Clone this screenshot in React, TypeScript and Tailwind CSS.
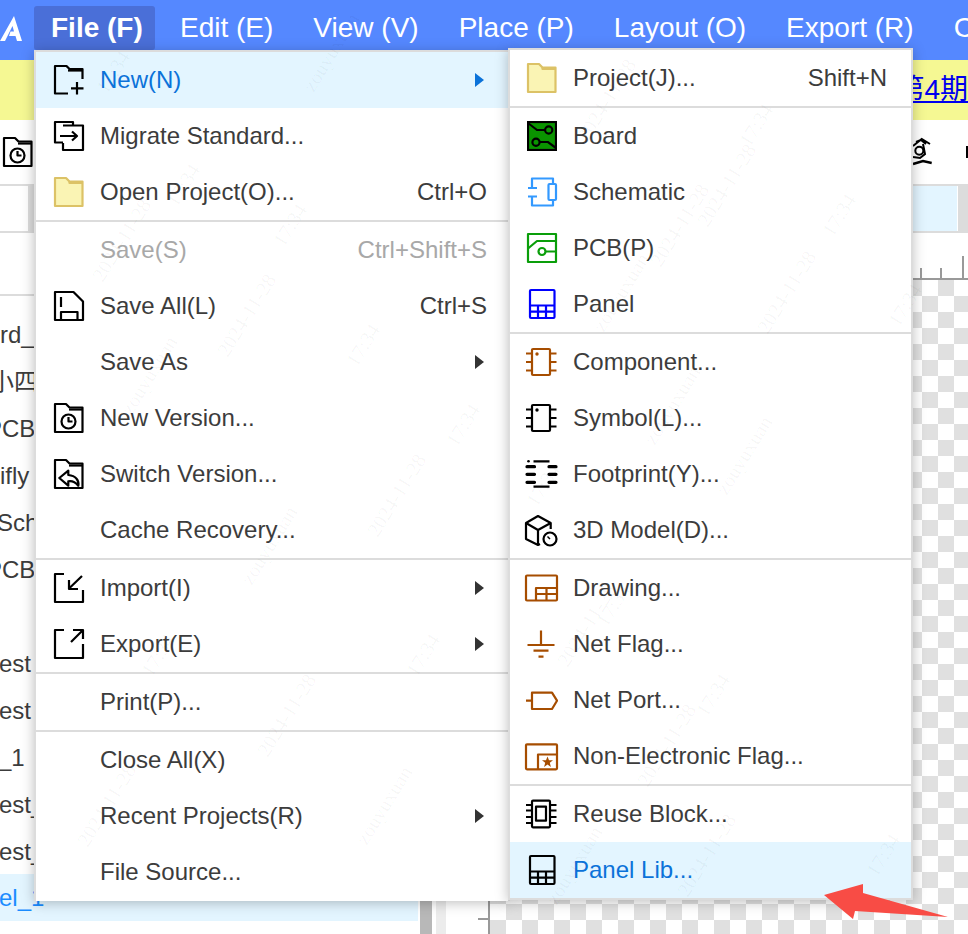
import React from "react";

const BROWN = "#a64d00";

function Ico({ children, color = "#000", dx = 0 }: { children: React.ReactNode; color?: string; dx?: number }) {
  return (
    <svg width="30" height="30" viewBox="0 0 30 30" fill="none" stroke={color} strokeWidth="2.2" strokeLinejoin="round" className="shrink-0 overflow-visible">
      <g transform={`translate(${dx} 0)`}>{children}</g>
    </svg>
  );
}

const folderPath = "M1 1H12L15.5 4.5H28.5V29H1Z";

const icons: Record<string, React.ReactNode> = {
  new: (
    <Ico>
      <path d="M14 28.5H1V1H12.5L15.5 4H28.5V14" />
      <path d="M14 5.5H28" />
      <path d="M23 17V29.5M17 23.3H29.5" />
    </Ico>
  ),
  migrate: (
    <Ico>
      <path d="M19 4.5V1H1V21.5H9" />
      <path d="M9 4.5H29V29H9V22" />
      <path d="M6 15H23M18 10.5L23 15L18 19.5" />
    </Ico>
  ),
  yellow: (
    <Ico color="#dcc266">
      <path d={folderPath} fill="#faf4b4" />
      <path d="M15.5 4.5L15.5 6H28.5" />
    </Ico>
  ),
  saveAll: (
    <Ico>
      <path d="M1 1H19.5L29 10.5V29H1Z" />
      <path d="M7 6V16M7 29V21H23.5V29" />
    </Ico>
  ),
  folderClock: (
    <Ico>
      <path d={folderPath} />
      <path d="M15 6.5H28" />
      <circle cx="14.5" cy="18.5" r="7" />
      <path d="M14.5 14V18.5H18.5" />
    </Ico>
  ),
  folderBack: (
    <Ico>
      <path d={folderPath} />
      <path d="M15 6.5H28" />
      <path d="M5.3 19L14.3 11.7V16C22 16.7 25.3 21.7 24.3 26.7C21 22.7 17.7 21.7 14.3 22.3V26.7Z" />
    </Ico>
  ),
  import: (
    <Ico>
      <path d="M10 1H1V29H29V17" />
      <path d="M28 3L15 15.5M15 7V16H24" />
    </Ico>
  ),
  export: (
    <Ico>
      <path d="M10 1H1V29H29V15" />
      <path d="M17 13L29 1M19 1H29V10" />
    </Ico>
  ),
  board: (
    <svg width="30" height="30" viewBox="0 0 30 30" fill="none" stroke="#000" strokeWidth="2.2" className="shrink-0">
      <rect x="1" y="1" width="28" height="28" fill="#0a9400" />
      <path d="M1 2L10 9H18M12.5 21H21L29 27" />
      <circle cx="21.7" cy="9" r="3.6" />
      <circle cx="9" cy="21.3" r="3.6" />
    </svg>
  ),
  schematic: (
    <Ico color="#3399ff">
      <path d="M5 11V1.5H26V7M5 19.5V28.5H26V23" />
      <path d="M1 11H10M1 19.5H10" />
      <rect x="21.5" y="7" width="7.5" height="16" rx="1" />
    </Ico>
  ),
  pcb: (
    <Ico color="#0a9e0a">
      <rect x="1" y="1" width="28" height="28" />
      <path d="M1 15.5L10 8H29M18.5 18.5H29" />
      <circle cx="15" cy="18.5" r="3.5" />
    </Ico>
  ),
  panel: (
    <Ico color="#0000ff">
      <rect x="3" y="1" width="24.5" height="28" rx="1" />
      <path d="M3 16.5H27.5M3 22.7H27.5M11 16.5V29M19 16.5V29" />
    </Ico>
  ),
  component: (
    <Ico color={BROWN} dx={-2}>
      <rect x="7" y="2" width="18" height="26" rx="1" />
      <path d="M1 6.5H7M1 15H7M1 23.5H7M25 6.5H31.5M25 15H31.5M25 23.5H31.5" />
      <circle cx="12" cy="7" r="1.7" fill={BROWN} stroke="none" />
    </Ico>
  ),
  symbol: (
    <Ico dx={-2}>
      <rect x="7" y="2" width="18" height="26" rx="1" />
      <path d="M1 6.5H7M1 15H7M1 23.5H7M25 6.5H31.5M25 15H31.5M25 23.5H31.5" />
      <circle cx="12" cy="7" r="1.7" fill="#000" stroke="none" />
    </Ico>
  ),
  footprint: (
    <Ico dx={-2}>
      <circle cx="3.5" cy="2.3" r="1.3" fill="#000" stroke="none" />
      <path d="M8.5 2.3H24.5M8.5 27.7H24.5" />
      <path d="M2 7.7H9.5M2 15.3H9.5M2 23.3H9.5M24 7.7H31M24 15.3H31M24 23.3H31" strokeWidth="3.2" strokeLinecap="round" />
    </Ico>
  ),
  model: (
    <Ico dx={-2}>
      <path d="M25.7 14V8L13 1L1 8V24L13 30L15 29" />
      <path d="M1 8L13 15L25.7 8M13 15V30" />
      <circle cx="25" cy="24" r="6.5" />
      <path d="M25 24L22.5 21.5" strokeWidth="1.5" />
    </Ico>
  ),
  drawing: (
    <Ico color={BROWN} dx={-2}>
      <rect x="1" y="2.5" width="31" height="25" rx="1" />
      <path d="M11 27.5V15H32M11 21H32M21.5 15V27.5" />
    </Ico>
  ),
  flag: (
    <Ico color={BROWN} dx={-1}>
      <path d="M15 1.5V16M1.5 16H28.5M7.5 21.7H22.5M12.5 27.7H17.5" />
    </Ico>
  ),
  port: (
    <Ico color={BROWN} dx={-2}>
      <path d="M1 15.7H7M7 7.7H27L32 15.7L27 24H7Z" />
    </Ico>
  ),
  nonElectric: (
    <Ico color={BROWN} dx={-2}>
      <rect x="1" y="3.3" width="31" height="25" rx="1" />
      <path d="M13 28V13.5H32" />
      <path d="M22.5 15.5L24 19.3H28L24.8 21.8L25.9 26L22.5 23.5L19.1 26L20.2 21.8L17 19.3H21Z" fill={BROWN} stroke="none" />
    </Ico>
  ),
  reuse: (
    <Ico dx={-2}>
      <rect x="7" y="1.7" width="18" height="26.6" rx="1" />
      <rect x="11" y="7.7" width="10" height="14" />
      <path d="M1 6H7M1 11.5H7M1 18H7M1 24H7M25 6H31.5M25 11.5H31.5M25 18H31.5M25 24H31.5" />
    </Ico>
  ),
  panelLib: (
    <Ico>
      <rect x="3" y="1" width="24.5" height="28" rx="1" />
      <path d="M3 16.5H27.5M3 22.7H27.5M11 16.5V29M19 16.5V29" />
    </Ico>
  ),
};

type Item = { label?: string; icon?: string; key?: string; arrow?: boolean; active?: boolean; disabled?: boolean; sep?: boolean };

const fileMenu: Item[] = [
  { label: "New(N)", icon: "new", arrow: true, active: true },
  { label: "Migrate Standard...", icon: "migrate" },
  { label: "Open Project(O)...", icon: "yellow", key: "Ctrl+O" },
  { sep: true },
  { label: "Save(S)", key: "Ctrl+Shift+S", disabled: true },
  { label: "Save All(L)", icon: "saveAll", key: "Ctrl+S" },
  { label: "Save As", arrow: true },
  { label: "New Version...", icon: "folderClock" },
  { label: "Switch Version...", icon: "folderBack" },
  { label: "Cache Recovery..." },
  { sep: true },
  { label: "Import(I)", icon: "import", arrow: true },
  { label: "Export(E)", icon: "export", arrow: true },
  { sep: true },
  { label: "Print(P)..." },
  { sep: true },
  { label: "Close All(X)" },
  { label: "Recent Projects(R)", arrow: true },
  { label: "File Source..." },
];

const newMenu: Item[] = [
  { label: "Project(J)...", icon: "yellow", key: "Shift+N" },
  { sep: true },
  { label: "Board", icon: "board" },
  { label: "Schematic", icon: "schematic" },
  { label: "PCB(P)", icon: "pcb" },
  { label: "Panel", icon: "panel" },
  { sep: true },
  { label: "Component...", icon: "component" },
  { label: "Symbol(L)...", icon: "symbol" },
  { label: "Footprint(Y)...", icon: "footprint" },
  { label: "3D Model(D)...", icon: "model" },
  { sep: true },
  { label: "Drawing...", icon: "drawing" },
  { label: "Net Flag...", icon: "flag" },
  { label: "Net Port...", icon: "port" },
  { label: "Non-Electronic Flag...", icon: "nonElectric" },
  { sep: true },
  { label: "Reuse Block...", icon: "reuse" },
  { label: "Panel Lib...", icon: "panelLib", active: true },
];

function MenuRows({ items, padClass }: { items: Item[]; padClass: string }) {
  return (
    <>
      {items.map((it, i) =>
        it.sep ? (
          <div key={i} className="h-[2px] bg-[#dcdcdc]" />
        ) : (
          <div
            key={i}
            className={`flex h-14 items-center ${padClass} ${it.active ? "bg-[#e3f5ff] text-[#0b72d9]" : it.disabled ? "text-[#a8a8a8]" : "text-[#3c3c3c]"}`}
          >
            <div className="h-[30px] w-[30px] shrink-0">{it.icon ? icons[it.icon] : null}</div>
            <span className="ml-4 whitespace-nowrap">{it.label}</span>
            {it.key && <span className="ml-auto">{it.key}</span>}
            {it.arrow && (
              <svg width="9" height="14" viewBox="0 0 9 14" className="ml-auto mr-[3px]">
                <path d="M0 0L9 7L0 14Z" fill={it.active ? "#0b72d9" : "#333"} />
              </svg>
            )}
          </div>
        ),
      )}
    </>
  );
}

const topMenu = ["Edit (E)", "View (V)", "Place (P)", "Layout (O)", "Export (R)", "C"];

const treeRows = [
  { t: "rd_", cls: "" },
  { t: "小四", cls: "-ml-[10px]" },
  { t: "PCB", cls: "-ml-[14px]" },
  { t: "ifly", cls: "" },
  { t: "Sche", cls: "-ml-[3px]" },
  { t: "PCB", cls: "-ml-[14px]" },
  { t: "", cls: "" },
  { t: "est", cls: "-ml-[1px]" },
  { t: "est", cls: "-ml-[1px]" },
  { t: "_1", cls: "-ml-[2px]" },
  { t: "est_", cls: "-ml-[1px]" },
  { t: "est_", cls: "-ml-[1px]" },
];

const marks: [string, number, number][] = [
  ["17:34", 90, 57],
  ["zouyuxuan", 287, 37],
  ["17:34", 160, 170],
  ["2024-11-28", 75, 225],
  ["17:34", 267, 210],
  ["zouyuxuan", 105, 360],
  ["2024-11-28", 200, 300],
  ["17:34", 340, 330],
  ["2024-11-28", 350, 480],
  ["17:34", 440, 410],
  ["zouyuxuan", 225, 530],
  ["17:34", 135, 640],
  ["2024-11-28", 60, 790],
  ["2024-11-28", 240, 700],
  ["17:34", 400, 640],
  ["zouyuxuan", 340, 790],
  ["2024-11-28", 560, 85],
  ["17:34", 733, 110],
  ["2024-11-28", 680, 170],
  ["17:34", 816, 200],
  ["2024-11-28", 633, 210],
  ["zouyuxuan", 577, 277],
  ["2024-11-28", 740, 277],
  ["17:34", 882, 290],
  ["zouyuxuan", 628, 390],
  ["zouyuxuan", 700, 440],
  ["17:34", 520, 470],
  ["17:34", 690, 680],
  ["2024-11-28", 620, 730],
  ["2024-11-28", 540, 610],
  ["zouyuxuan", 530, 850],
  ["2024-11-28", 660, 840],
  ["17:34", 860, 840],
  ["17:34", 590, 590],
];

export default function App() {
  return (
    <div className="relative h-[934px] w-[968px] overflow-hidden bg-white font-['Liberation_Sans','Noto_Sans_CJK_SC',sans-serif]">
      {/* top bar */}
      <div className="flex h-[60px] items-start overflow-hidden bg-[#5588ff] text-[28px] text-white">
        <div className="flex h-14 w-[34px] shrink-0 items-center">
          <svg width="22" height="28" viewBox="0 0 22 28" className="mt-[2px]">
            <path d="M0 26L14 1L22 26H17L15.5 21H9L10.5 16.5H14L12.5 11L5 26Z" fill="#fff" />
          </svg>
        </div>
        <div className="mt-[6px] flex h-11 w-[121px] shrink-0 items-center rounded-[3px] bg-[#4a6fd8] pl-[17px] font-bold whitespace-nowrap">File (F)</div>
        <div className="ml-[9px] flex shrink-0 gap-2">
          {topMenu.map((t) => (
            <div key={t} className="flex h-14 shrink-0 items-center px-4 whitespace-nowrap">
              {t}
            </div>
          ))}
        </div>
      </div>
      {/* notice strip */}
      <div className="flex h-[60px] items-center justify-end overflow-hidden bg-[#f5f893] text-[28px] text-[#0000ee]">
        <span className="whitespace-nowrap underline">第4期</span>
      </div>
      {/* toolbar */}
      <div className="flex h-[66px] items-center border-b-2 border-[#dcdcdc] pl-[3px]">
        {icons.folderClock}
        <svg width="24" height="30" viewBox="0 0 24 30" className="ml-[879px] shrink-0" fill="none" stroke="#000" strokeWidth="2">
          <path d="M1 9L9.7 2L18 7M4 5L9 3L14 7" />
          <path d="M11 7L13 17L8 21L1 20" />
          <circle cx="7.3" cy="13.7" r="4" />
          <path d="M1 27L11 24L19.7 26" strokeWidth="2.4" />
        </svg>
        <div className="ml-[30px] h-3 w-1 shrink-0 bg-black" />
      </div>
      {/* tab row */}
      <div className="flex h-[47px] border-b-2 border-[#dcdcdc]">
        <div className="w-7" />
        <div className="w-[6px] bg-[#dcdcdc]" />
        <div className="ml-auto w-[300px] bg-[#e3f5ff]" />
        <div className="ml-[1px] w-[10px] bg-[#dcdcdc]" />
      </div>
      {/* body */}
      <div className="flex h-[701px]">
        <div className="w-[418px] shrink-0 text-[24px] text-[#3c3c3c]">
          <div className="h-[63px] border-b-2 border-[#dcdcdc]" />
          <div className="h-[15px]" />
          {treeRows.map((r, i) => (
            <div key={i} className="flex h-[47px] items-center whitespace-nowrap">
              <span className={r.cls}>{r.t}</span>
            </div>
          ))}
          <div className="-mt-[1px] flex h-[47px] items-center bg-[#e3f5ff] whitespace-nowrap text-[#1a8cff]">
            <span className="-ml-[1px]">el_1</span>
          </div>
        </div>
        <div className="ml-[2px] w-3 shrink-0 bg-[#b8b8b8]" />
        <div className="ml-1 w-[10px] shrink-0 bg-[#ececec]" />
        <div className="flex w-[42px] shrink-0 flex-col items-end">
          <div className="mt-[685px] h-[2px] w-[10px] bg-[#999]" />
        </div>
        <div className="flex min-w-0 flex-1 flex-col">
          <div className="relative h-[47px] shrink-0 border-b-2 border-[#999]">
            <div className="absolute bottom-0 left-[432px] h-[10px] w-[2px] bg-[#999]" />
            <div className="absolute bottom-0 left-[452px] h-[10px] w-[2px] bg-[#999]" />
            <div className="absolute bottom-0 left-[474px] h-[22px] w-[2px] bg-[#999]" />
          </div>
          <div className="min-h-0 flex-1 border-l-2 border-[#999] bg-[conic-gradient(#e0e0e0_25%,#fff_0_50%,#e0e0e0_0_75%,#fff_0)] bg-[size:32px_32px] bg-[position:-16px_0px]" />
        </div>
      </div>

      {/* File menu */}
      <div className="absolute left-[34px] top-[50px] h-[851px] w-[476px] overflow-hidden border-2 border-b-0 border-[#dcdcdc] bg-white text-[24px] shadow-[0_2px_12px_rgba(0,0,0,0.25)]">
        <MenuRows items={fileMenu} padClass="pl-[18px] pr-[21px]" />
      </div>
      {/* New submenu */}
      <div className="absolute left-[508px] top-[48px] h-[852px] w-[405px] overflow-hidden border-2 border-[#dcdcdc] bg-white text-[24px] shadow-[0_2px_12px_rgba(0,0,0,0.25)]">
        <MenuRows items={newMenu} padClass="pl-[17px] pr-6" />
      </div>

      {/* annotation arrow */}
      <svg width="130" height="40" viewBox="0 0 130 40" className="absolute left-[822px] top-[882px]">
        <path d="M2 13L41 2L41 11L126 35L33 29L31 37Z" fill="#f84c45" />
      </svg>

      {/* watermark */}
      <div className="pointer-events-none absolute inset-0 overflow-hidden font-['Liberation_Serif',serif] text-[20px] text-black/[0.04]">
        {marks.map(([t, x, y], i) => (
          <span key={i} className="absolute -rotate-[58deg] whitespace-nowrap" style={{ left: x, top: y }}>
            {t}
          </span>
        ))}
      </div>
    </div>
  );
}
